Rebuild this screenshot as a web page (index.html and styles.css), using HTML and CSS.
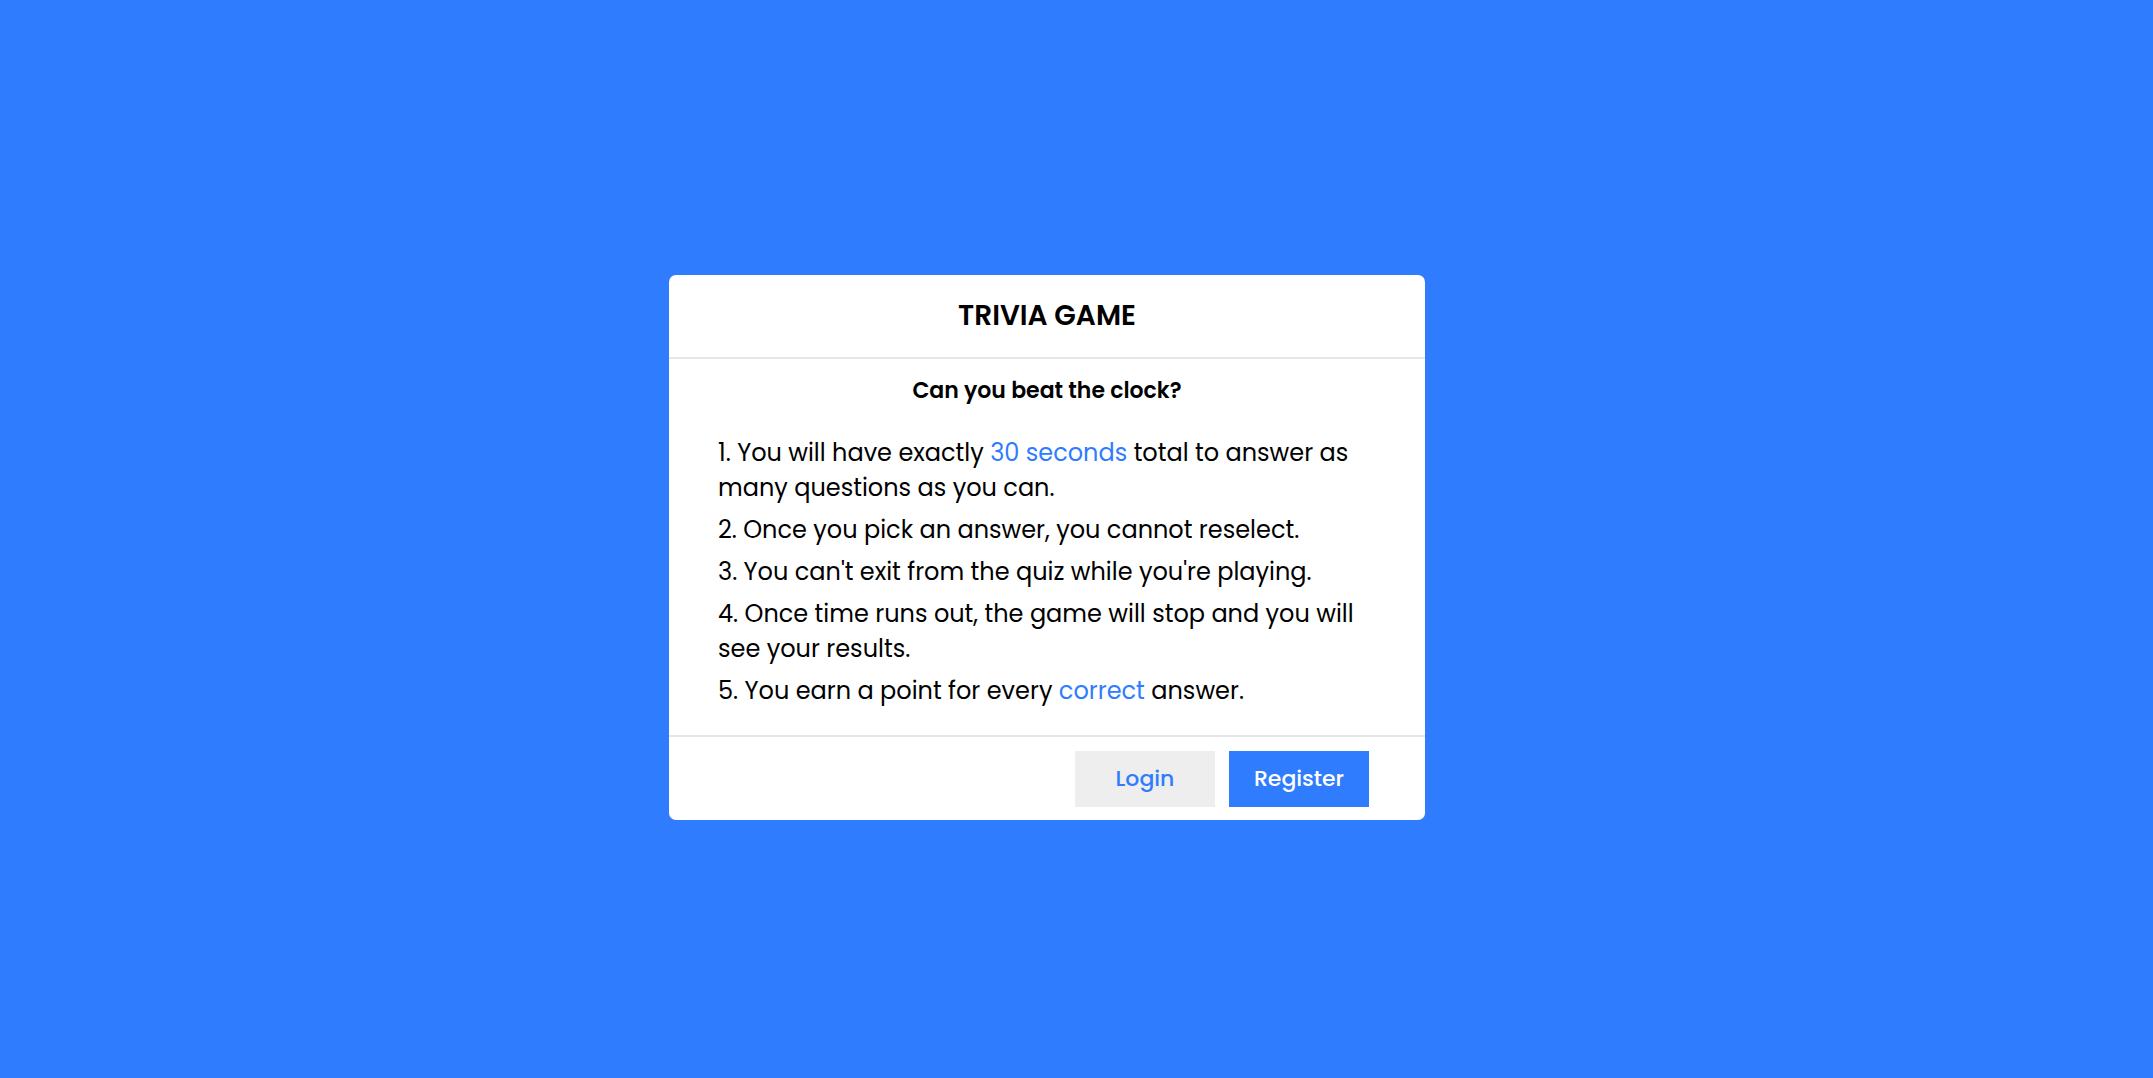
FILE: index.html
```html
<!DOCTYPE html>
<html lang="en">
<head>
<meta charset="utf-8">
<meta name="viewport" content="width=device-width, initial-scale=1">
<title>Trivia Game</title>
<link rel="stylesheet" href="styles.css">
</head>
<body>
<main class="card">
  <header class="card-header">
    <h1 class="title">TRIVIA GAME</h1>
  </header>
  <section class="card-body">
    <h2 class="subtitle">Can you beat the clock?</h2>
    <div class="rules">
      <p class="rule">1. You will have exactly <span class="accent">30 seconds</span> total to answer as many questions as you can.</p>
      <p class="rule">2. Once you pick an answer, you cannot reselect.</p>
      <p class="rule">3. You can't exit from the quiz while you're playing.</p>
      <p class="rule">4. Once time runs out, the game will stop and you will see your results.</p>
      <p class="rule">5. You earn a point for every <span class="accent">correct</span> answer.</p>
    </div>
  </section>
  <footer class="card-footer">
    <button class="button button-light" type="button">Login</button>
    <button class="button button-primary" type="button">Register</button>
  </footer>
</main>
</body>
</html>
```
FILE: styles.css
```css
* {
  box-sizing: border-box;
  margin: 0;
  padding: 0;
}

body {
  display: flex;
  align-items: center;
  justify-content: center;
  min-height: 100vh;
  padding: 16px 59px 0 0;
  background: #2f7cff;
  color: #000;
  font-family: Poppins, Inter, sans-serif;
  font-size: 24px;
  line-height: 35px;
}

.card {
  width: 100%;
  max-width: 756px;
  background: #fff;
  border-radius: 7px;
}

.card-header {
  padding: 23px 49px 24px;
  border-bottom: 2px solid #e6e6e6;
  text-align: center;
}

.title {
  font-size: 28px;
  font-weight: 600;
}

.card-body {
  padding: 14px 49px 27px;
}

.subtitle {
  margin-bottom: 27px;
  font-size: 22px;
  font-weight: 600;
  text-align: center;
}

.rules {
  display: flex;
  flex-direction: column;
  gap: 7px;
}

.accent {
  color: #2f7cff;
}

.card-footer {
  display: flex;
  justify-content: flex-end;
  gap: 14px;
  padding: 14px 56px 13px;
  border-top: 2px solid #e6e6e6;
}

.button {
  width: 140px;
  height: 56px;
  border: 0;
  font: inherit;
  font-size: 22px;
  font-weight: 500;
  cursor: pointer;
}

.button-light {
  background: #eee;
  color: #2f7cff;
}

.button-primary {
  background: #2f7cff;
  color: #fff;
}
```
